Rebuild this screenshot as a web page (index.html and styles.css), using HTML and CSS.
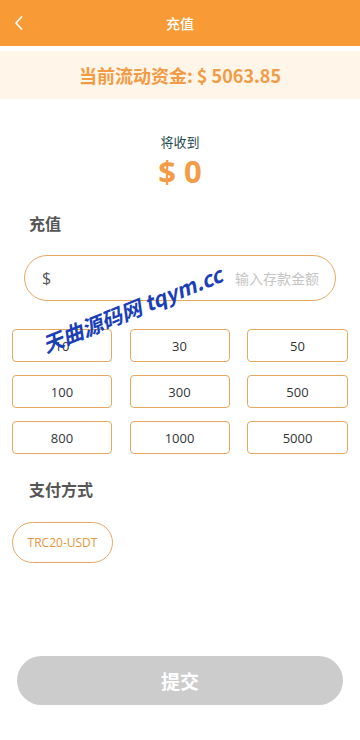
FILE: index.html
```html
<!DOCTYPE html>
<html lang="zh-CN">
<head>
<meta charset="utf-8">
<meta name="viewport" content="width=device-width, initial-scale=1">
<title>充值</title>
<link rel="stylesheet" href="styles.css">
</head>
<body>
<div class="page">
  <header class="topbar">
    <span class="back">
      <svg width="10" height="16" viewBox="0 0 10 16"><path d="M7.5 2 L2 8 L7.5 14" fill="none" stroke="#fff" stroke-width="1.7" stroke-linecap="round" stroke-linejoin="round"/></svg>
    </span>
    <h1 class="title">充值</h1>
  </header>
  <div class="balance">当前流动资金: $ 5063.85</div>
  <div class="receive">
    <div class="receive-label">将收到</div>
    <div class="receive-value">$ 0</div>
  </div>
  <h2 class="section-title">充值</h2>
  <div class="input-wrap">
    <span class="cur">$</span>
    <span class="placeholder">输入存款金额</span>
  </div>
  <div class="amounts">
    <div class="amt">10</div>
    <div class="amt">30</div>
    <div class="amt">50</div>
    <div class="amt">100</div>
    <div class="amt">300</div>
    <div class="amt">500</div>
    <div class="amt">800</div>
    <div class="amt">1000</div>
    <div class="amt">5000</div>
  </div>
  <h2 class="section-title pay-title">支付方式</h2>
  <div class="methods">
    <div class="method">TRC20-USDT</div>
  </div>
  <div class="spacer"></div>
  <div class="submit-wrap"><div class="submit">提交</div></div>
  <div class="watermark">天曲源码网 tqym.cc</div>
</div>
</body>
</html>
```
FILE: styles.css
```css
* { box-sizing: border-box; margin: 0; padding: 0; }
html, body { background: #fff; }
body {
  font-family: "Noto Sans CJK SC", "Open Sans", sans-serif;
  color: #333;
  width: 360px;
  height: 740px;
  overflow: hidden;
}
.page { position: relative; height: 740px; display: flex; flex-direction: column; }
.topbar {
  height: 46px;
  background: #f89b36;
  display: flex;
  align-items: center;
  justify-content: center;
  position: relative;
}
.back { position: absolute; left: 14px; top: 15px; width: 10px; height: 16px; display: flex; }
.title { font-size: 14px; font-weight: 500; color: #fff; line-height: 1; }
.balance {
  margin-top: 5px;
  height: 48px;
  background: #fff5e8;
  display: flex;
  align-items: center;
  justify-content: center;
  color: #f39b45;
  font-size: 18px;
  font-weight: 700;
  font-family: "Noto Sans CJK SC", sans-serif;
}
.receive { margin-top: 34px; text-align: center; }
.receive-label { font-size: 13px; color: #1e4b4f; line-height: 18px; }
.receive-value {
  font-family: "Open Sans", sans-serif;
  font-size: 31px;
  font-weight: 700;
  color: #f39b45;
  line-height: 40px;
}
.section-title {
  font-size: 16px;
  font-weight: 700;
  color: #555;
  margin: 21px 0 0 29px;
  line-height: 22px;
}
.input-wrap {
  margin: 21px 24px 0 24px;
  height: 46px;
  border: 1px solid #e8a760;
  border-radius: 23px;
  display: flex;
  align-items: center;
  justify-content: space-between;
  padding: 0 16px 0 17px;
}
.cur { font-size: 16px; color: #555; font-family: "Open Sans", sans-serif; }
.placeholder { font-size: 14px; color: #c4c4c4; }
.amounts {
  margin: 28px 12px 0 12px;
  display: grid;
  grid-template-columns: 100px 100px 101px;
  column-gap: 17.5px;
  row-gap: 13px;
}
.amt {
  height: 33px;
  border: 1px solid #e8a760;
  border-radius: 4px;
  display: flex;
  align-items: center;
  justify-content: center;
  font-size: 13px;
  color: #333;
  font-family: "Open Sans", sans-serif;
}
.pay-title { margin-top: 24px; }
.methods { margin: 22px 0 0 12px; display: flex; }
.method {
  width: 101px;
  height: 41px;
  border: 1px solid #e8a760;
  border-radius: 21px;
  display: flex;
  align-items: center;
  justify-content: center;
  font-size: 12px;
  color: #e8963d;
  font-family: "Open Sans", sans-serif;
}
.spacer { flex: 1; }
.submit-wrap { padding: 0 17px 35px 17px; }
.submit {
  height: 49px;
  background: #cccccc;
  border-radius: 25px;
  display: flex;
  align-items: center;
  justify-content: center;
  color: #fff;
  font-size: 19px;
  font-weight: 700;
}
.watermark {
  position: absolute;
  left: 47px;
  top: 334px;
  font-size: 21px;
  font-weight: 700;
  font-style: italic;
  color: #1b3fb8;
  transform: rotate(-22deg);
  transform-origin: left bottom;
  white-space: nowrap;
  line-height: 1;
}
```
